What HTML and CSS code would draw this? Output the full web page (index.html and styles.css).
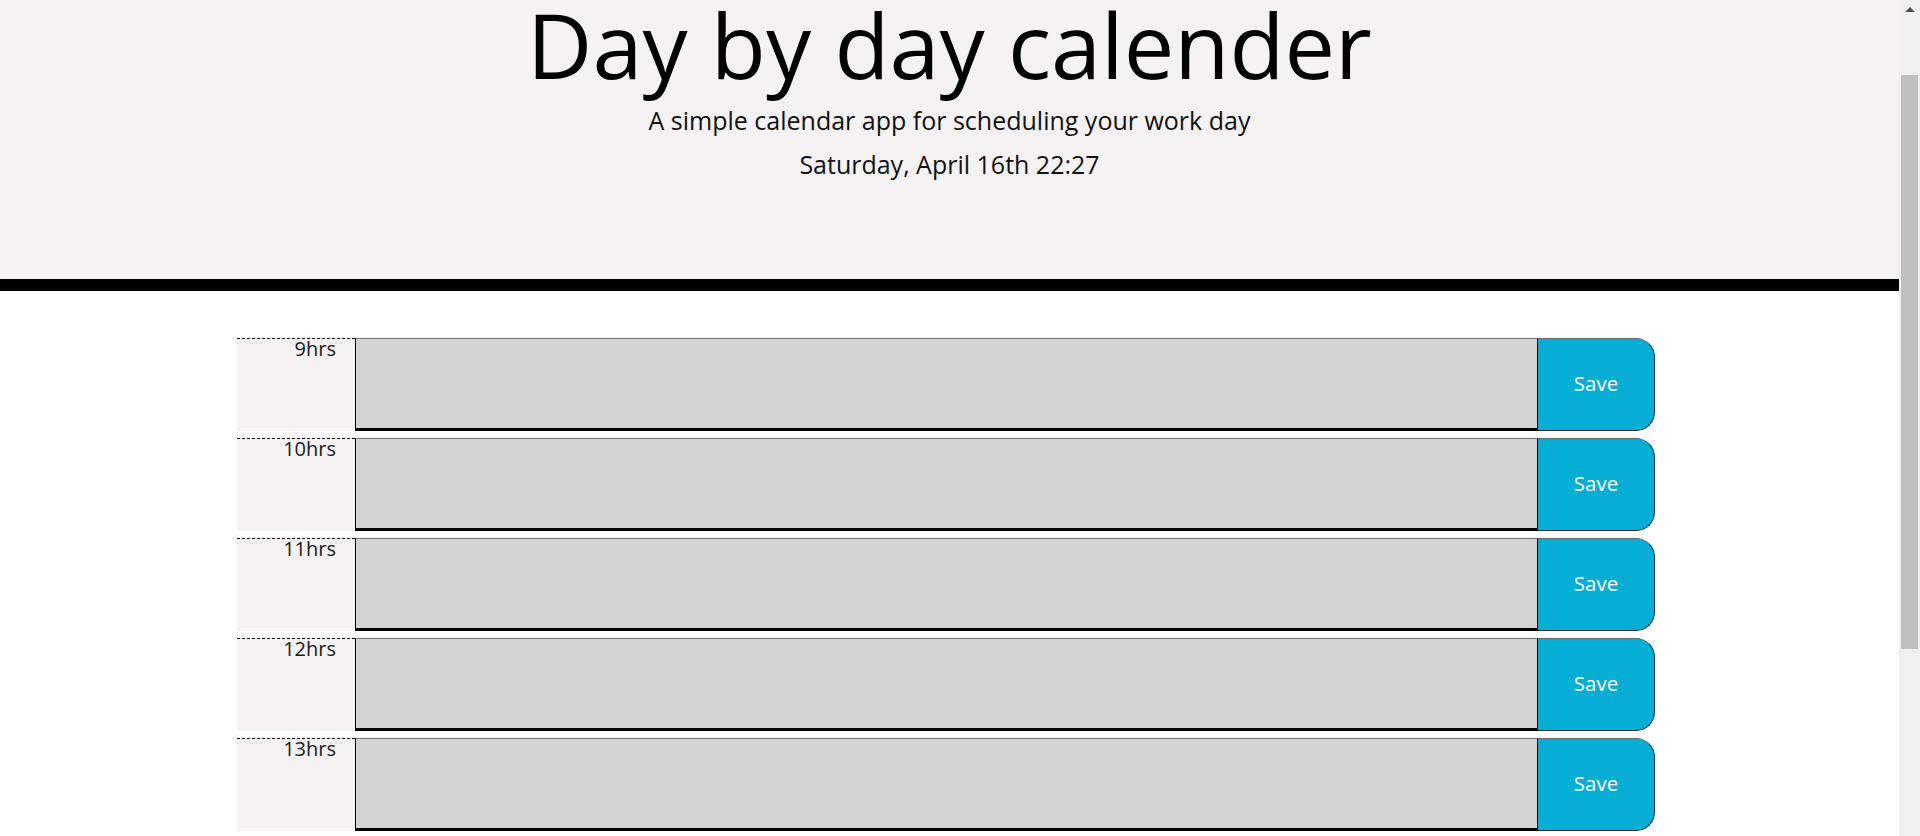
FILE: index.html
```html
<!DOCTYPE html>
<html lang="en">
<head>
<meta charset="utf-8">
<title>Day by day calender</title>
<link rel="stylesheet" href="styles.css">
</head>
<body>
<div class="page">
  <header class="jumbotron">
    <h1 class="title">Day by day calender</h1>
    <p class="lead">A simple calendar app for scheduling your work day</p>
    <p class="lead date">Saturday, April 16th 22:27</p>
  </header>
  <main class="container">
    <div class="time-block"><div class="hour">9hrs</div><textarea class="description past"></textarea><button class="saveBtn">Save</button></div>
    <div class="time-block"><div class="hour">10hrs</div><textarea class="description past"></textarea><button class="saveBtn">Save</button></div>
    <div class="time-block"><div class="hour">11hrs</div><textarea class="description past"></textarea><button class="saveBtn">Save</button></div>
    <div class="time-block"><div class="hour">12hrs</div><textarea class="description past"></textarea><button class="saveBtn">Save</button></div>
    <div class="time-block"><div class="hour">13hrs</div><textarea class="description past"></textarea><button class="saveBtn">Save</button></div>
  </main>
</div>
<div class="scrollbar" aria-hidden="true">
  <div class="scroll-arrow"></div>
  <div class="scroll-thumb"></div>
</div>
</body>
</html>
```
FILE: styles.css
```css
html {
  overflow: hidden;
}

body {
  margin: 0;
  font-family: "Open Sans", "Noto Sans", sans-serif;
  line-height: 1;
  color: #212529;
  background: #ffffff;
}

.page {
  margin-right: 21px;
}

.jumbotron {
  height: 279px;
  background: #f4f2f3;
  border-bottom: 12px solid #000000;
  text-align: center;
  color: #000000;
}

.title {
  margin: 0;
  padding-top: 0;
  font-size: 90px;
  font-weight: 400;
  line-height: 88px;
}

.lead {
  margin: 17px 0 0;
  font-size: 25px;
  line-height: 30px;
  color: #111111;
}

.lead.date {
  margin-top: 14px;
}

.container {
  width: 1425px;
  margin: 46px auto 0;
}

.time-block {
  display: flex;
  align-items: flex-start;
  height: 100px;
  box-sizing: border-box;
  border-top: 1px solid #f3f3f3;
  border-radius: 19px;
}

.hour {
  width: 118px;
  height: 93px;
  box-sizing: border-box;
  background: #f4f2f3;
  border-top: 1px dashed #000000;
  padding-right: 19px;
  text-align: right;
  font-size: 20px;
  line-height: 20px;
  color: #1a1a1a;
}

.description {
  display: block;
  width: 1183px;
  height: 93px;
  box-sizing: border-box;
  margin: 0;
  padding: 12px;
  resize: none;
  background: #d3d3d3;
  border: 0;
  border-top: 1px solid #767676;
  border-left: 1px solid #000000;
  border-right: 1px solid #000000;
  border-bottom: 3px solid #000000;
  font-family: inherit;
  font-size: 20px;
}

.saveBtn {
  width: 117px;
  height: 93px;
  box-sizing: border-box;
  margin: 0;
  padding: 0 0 3px;
  background: #06aed5;
  color: #ffffff;
  font-family: inherit;
  font-size: 20.5px;
  border: 1px solid #1b2b33;
  border-top-color: #6c6c6c;
  border-left: 0;
  border-radius: 0 19px 19px 0;
}

.scrollbar {
  position: fixed;
  top: 0;
  right: 0;
  width: 21px;
  height: 100%;
  background: #f0f0f0;
  display: flex;
  flex-direction: column;
  align-items: center;
}

.scroll-arrow {
  margin-top: 7px;
  width: 0;
  height: 0;
  border-left: 5px solid transparent;
  border-right: 5px solid transparent;
  border-bottom: 5px solid #505050;
}

.scroll-thumb {
  margin-top: 63px;
  width: 17px;
  height: 574px;
  background: #bfbfbf;
}
```
